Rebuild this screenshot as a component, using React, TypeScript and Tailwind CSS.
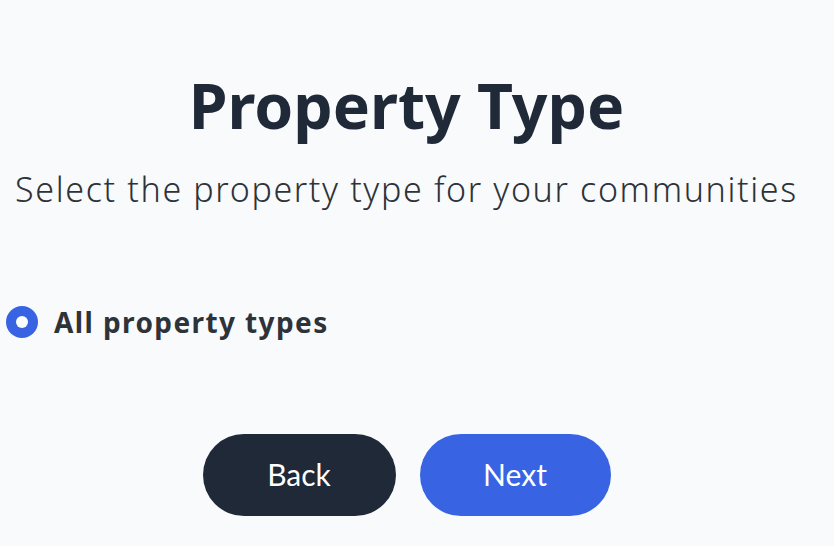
export default function App() {
  return (
    <div className="min-h-[546px] w-[834px] bg-[#f8fafc] font-['Lato',sans-serif]">
      <div className="flex w-[813px] flex-col items-center pt-[74px]">
        <h1 className="font-['Noto_Sans',sans-serif] text-[62.5px] font-bold leading-none text-[#1f2937]">
          Property Type
        </h1>
        <p className="mt-[35px] font-['Noto_Sans',sans-serif] text-[34px] font-light leading-none tracking-[1.65px] text-[#2d3339]">
          Select the property type for your communities
        </p>
        <label className="mt-[100px] flex items-center gap-[16px] self-start pl-[6px]">
          <span className="flex h-[32px] w-[32px] items-center justify-center rounded-full bg-[#3864e4]">
            <span className="h-[12px] w-[12px] rounded-full bg-white" />
          </span>
          <span className="font-['Noto_Sans',sans-serif] text-[28px] font-bold leading-[32px] tracking-[1.4px] text-[#2d3339]">
            All property types
          </span>
        </label>
        <div className="mt-[96px] flex gap-[24px]">
          <button className="flex h-[82px] w-[193px] items-center justify-center rounded-full bg-[#1f2937] text-[30px] text-white">
            Back
          </button>
          <button className="flex h-[82px] w-[191px] items-center justify-center rounded-full bg-[#3864e4] text-[30px] text-white">
            Next
          </button>
        </div>
      </div>
    </div>
  );
}
